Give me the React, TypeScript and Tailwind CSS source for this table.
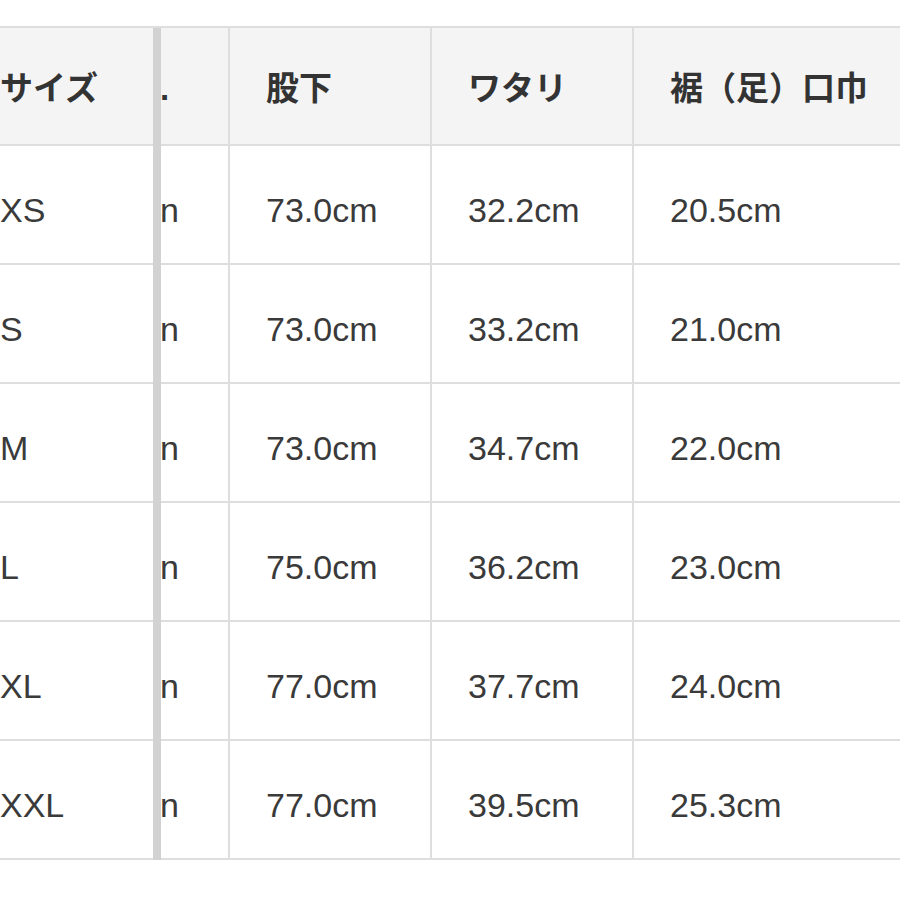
const FONT = '"Liberation Sans", Arial, "Noto Sans CJK JP", sans-serif';

const rows = [
  { size: "XS", inseam: "73.0cm", thigh: "32.2cm", hem: "20.5cm" },
  { size: "S", inseam: "73.0cm", thigh: "33.2cm", hem: "21.0cm" },
  { size: "M", inseam: "73.0cm", thigh: "34.7cm", hem: "22.0cm" },
  { size: "L", inseam: "75.0cm", thigh: "36.2cm", hem: "23.0cm" },
  { size: "XL", inseam: "77.0cm", thigh: "37.7cm", hem: "24.0cm" },
  { size: "XXL", inseam: "77.0cm", thigh: "39.5cm", hem: "25.3cm" },
];

// sticky first column, the rest scrolled a bit so the 2nd column is cut off
function Row({
  cells,
  head,
}: {
  cells: [string, string, string, string, string];
  head?: boolean;
}) {
  const cell = head
    ? "flex items-center pt-[6px] font-bold text-[33px] text-[#333]"
    : "flex items-center pt-[12px] text-[34px] text-[#3a3a3a]";
  const h = head ? "h-[118px]" : "h-[119px]";
  return (
    <div className={`flex ${h} border-b-2 border-[#dedede] ${head ? "bg-[#f4f4f4]" : "bg-white"}`}>
      <div className={`${cell} w-[153px] shrink-0`}>{cells[0]}</div>
      <div className="w-[8px] shrink-0 bg-[#d2d2d2] -mb-[2px]" />
      <div className={`${cell} w-[68px] shrink-0 overflow-hidden -ml-[1px]`}>{cells[1]}</div>
      <div className={`${cell} w-[202px] shrink-0 border-l-2 border-[#dedede] pl-[36px]`}>{cells[2]}</div>
      <div className={`${cell} w-[202px] shrink-0 border-l-2 border-[#dedede] pl-[36px]`}>{cells[3]}</div>
      <div className={`${cell} flex-1 border-l-2 border-[#dedede] pl-[36px] whitespace-nowrap`}>{cells[4]}</div>
    </div>
  );
}

export default function App() {
  return (
    <div className="w-[900px] h-[900px] bg-white overflow-hidden pt-[26px]" style={{ fontFamily: FONT }}>
      <div className="border-t-2 border-[#dedede]">
        <Row head cells={["サイズ", ".", "股下", "ワタリ", "裾（足）口巾"]} />
        {rows.map((r) => (
          <Row key={r.size} cells={[r.size, "n", r.inseam, r.thigh, r.hem]} />
        ))}
      </div>
    </div>
  );
}
